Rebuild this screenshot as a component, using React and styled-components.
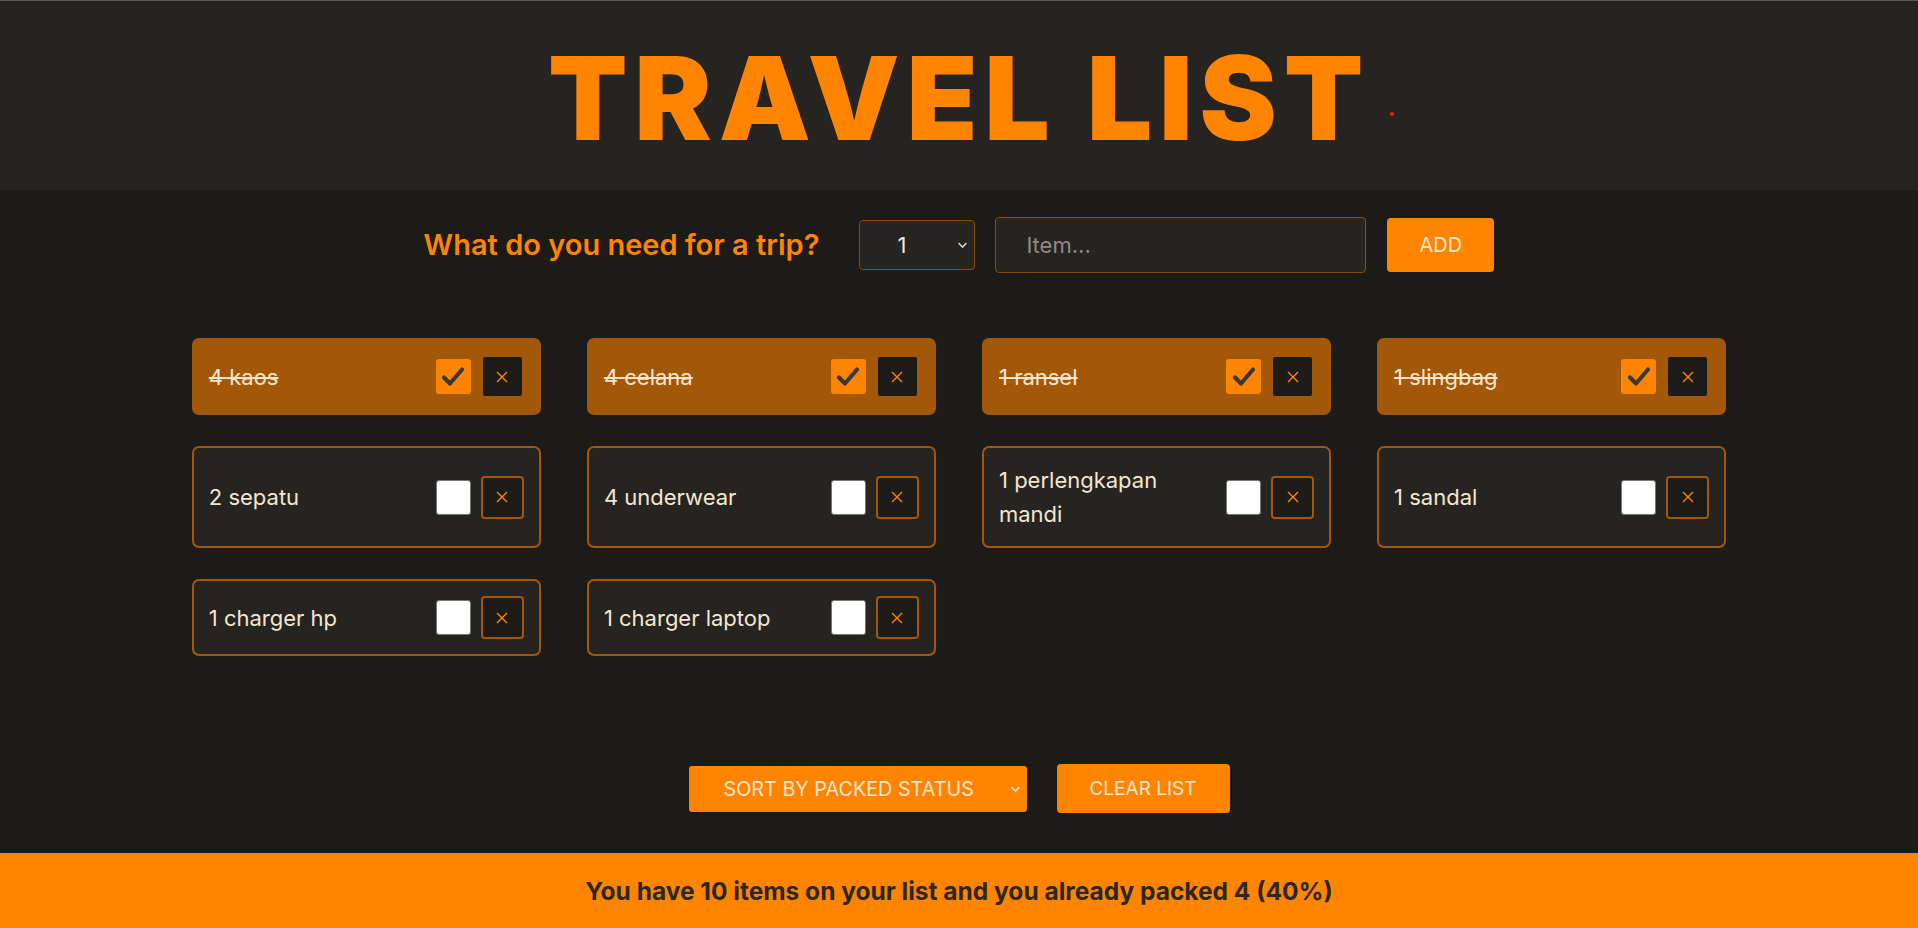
import React, { useState } from "react"
import styled, { createGlobalStyle } from "styled-components"

const GlobalStyle = createGlobalStyle`
    * { box-sizing: border-box; margin: 0; padding: 0; }
    html, body { height: 100%; }
    body {
        background: #1c1b18;
        font-family: Inter, "Noto Sans", "Liberation Sans", sans-serif;
        color: #f3e6d1;
    }
`

const Page = styled.div`
    height: 100vh;
    display: flex;
    flex-direction: column;
    border-top: 1px solid #5a5955;
`

// 헤더
const Header = styled.header`
    height: 189px;
    background: #252420;
    display: flex;
    justify-content: center;
    align-items: center;
    position: relative;
`
const Title = styled.h1`
    font-size: 116px;
    font-weight: 900;
    letter-spacing: 6.8px;
    color: #ff8500;
    line-height: 1;
    padding-top: 4px;
`
const Dot = styled.span`
    position: absolute;
    left: 1390px;
    top: 111px;
    width: 4px;
    height: 4px;
    border-radius: 50%;
    background: #e0201c;
`

// 입력
const Form = styled.form`
    display: flex;
    justify-content: center;
    align-items: center;
    padding: 26px 0 0;
    height: 83px;
`
const Question = styled.h3`
    font-size: 29px;
    font-weight: 600;
    color: #ff8500;
    margin-right: 40px;
`
const SelectBox = styled.div`
    position: relative;
    width: 116px;
    height: 50px;
    border: 1px solid #8a4a08;
    border-radius: 4px;
    background: #252420;
    display: flex;
    align-items: center;
    padding-left: 37px;
    font-size: 22px;
    margin-right: 20px;
`
const Chevron = styled.svg`
    position: absolute;
    right: 6px;
    top: 50%;
    margin-top: -4px;
`
const ItemInput = styled.div`
    width: 371px;
    height: 56px;
    border: 1px solid #8a4a08;
    border-radius: 4px;
    background: #252420;
    display: flex;
    align-items: center;
    padding-left: 30px;
    font-size: 22px;
    color: #8d8a83;
    margin-right: 21px;
`
const OrangeButton = styled.button`
    background: #ff8500;
    color: #f3e6d1;
    border: none;
    border-radius: 4px;
    font-family: inherit;
    font-size: ${(props) => props.fontSize || "20px"};
    text-transform: uppercase;
    width: ${(props) => props.width};
    height: ${(props) => props.height};
    cursor: pointer;
`

// 리스트
const ListArea = styled.div`
    flex: 1;
    display: flex;
    flex-direction: column;
    align-items: center;
    padding-top: 65px;
`
const Grid = styled.ul`
    list-style: none;
    width: 80%;
    display: grid;
    grid-template-columns: repeat(4, 1fr);
    column-gap: 46px;
    row-gap: 31px;
    align-content: start;
`
const Card = styled.li`
    display: flex;
    align-items: center;
    gap: 20px;
    padding: 15px;
    border-radius: 7px;
    border: 2px solid #a35708;
    background: ${(props) => (props.packed ? "#a35708" : "#252420")};
`
const ItemText = styled.span`
    flex: 1;
    font-size: 22px;
    line-height: 34px;
    color: #f3e6d1;
    text-decoration: ${(props) => (props.packed ? "line-through" : "none")};
    text-decoration-thickness: 2px;
`
const Controls = styled.div`
    display: flex;
    align-items: center;
    gap: 10px;
`
const CheckBox = styled.div`
    width: 35px;
    height: 35px;
    border-radius: 3px;
    background: ${(props) => (props.checked ? "#ff8500" : "#fff")};
    border: ${(props) => (props.checked ? "none" : "1px solid #767676")};
    display: flex;
    align-items: center;
    justify-content: center;
    cursor: pointer;
`
const DeleteButton = styled.button`
    width: 43px;
    height: 43px;
    border-radius: 4px;
    background: #1c1b18;
    border: 2px solid #a35708;
    display: flex;
    align-items: center;
    justify-content: center;
    cursor: pointer;
`

const Actions = styled.div`
    display: flex;
    justify-content: center;
    align-items: center;
    gap: 30px;
    padding-bottom: 40px;
`
const SortSelect = styled.div`
    position: relative;
    width: 338px;
    height: 46px;
    background: #ff8500;
    border-radius: 3px;
    display: flex;
    align-items: center;
    padding-left: 35px;
    font-size: 19.8px;
    text-transform: uppercase;
    color: #f3e6d1;
`

const Footer = styled.footer`
    height: 75px;
    background: #ff8500;
    display: flex;
    justify-content: center;
    align-items: center;
    font-size: 24.5px;
    font-weight: 700;
    color: #2a2724;
`

const initialItems = [
    { id: 1, qty: 4, name: "kaos", packed: true },
    { id: 2, qty: 4, name: "celana", packed: true },
    { id: 3, qty: 1, name: "ransel", packed: true },
    { id: 4, qty: 1, name: "slingbag", packed: true },
    { id: 5, qty: 2, name: "sepatu", packed: false },
    { id: 6, qty: 4, name: "underwear", packed: false },
    { id: 7, qty: 1, name: "perlengkapan mandi", packed: false },
    { id: 8, qty: 1, name: "sandal", packed: false },
    { id: 9, qty: 1, name: "charger hp", packed: false },
    { id: 10, qty: 1, name: "charger laptop", packed: false },
]

function CheckIcon() {
    return (
        <svg width="26" height="26" viewBox="0 0 26 26">
            <path d="M4 13.5 L10 19.5 L22 5.5" fill="none" stroke="#3b3936" strokeWidth="4.2" strokeLinecap="round" strokeLinejoin="round" />
        </svg>
    )
}

function CrossIcon() {
    return (
        <svg width="12" height="12" viewBox="0 0 12 12">
            <path d="M1 1 L11 11 M11 1 L1 11" stroke="#ff8500" strokeWidth="1.4" />
        </svg>
    )
}

function ChevronDown({ color }) {
    return (
        <Chevron width="11" height="8" viewBox="0 0 11 8">
            <path d="M1.5 2 L5.5 6 L9.5 2" fill="none" stroke={color} strokeWidth="1.6" />
        </Chevron>
    )
}

function Item({ item, onToggle }) {
    return (
        <Card packed={item.packed}>
            <ItemText packed={item.packed}>{item.qty} {item.name}</ItemText>
            <Controls>
                <CheckBox checked={item.packed} onClick={() => onToggle(item.id)}>
                    {item.packed && <CheckIcon />}
                </CheckBox>
                <DeleteButton><CrossIcon /></DeleteButton>
            </Controls>
        </Card>
    )
}

export default function App() {
    const [items, setItems] = useState(initialItems)
    const packed = items.filter((i) => i.packed).length
    const toggle = (id) => setItems(items.map((i) => (i.id === id ? { ...i, packed: !i.packed } : i)))

    return (
        <>
            <GlobalStyle />
            <Page>
                <Header>
                    <Title>TRAVEL LIST</Title>
                    <Dot />
                </Header>
                <Form onSubmit={(e) => e.preventDefault()}>
                    <Question>What do you need for a trip?</Question>
                    <SelectBox>
                        1
                        <ChevronDown color="#d8d0c2" />
                    </SelectBox>
                    <ItemInput>Item...</ItemInput>
                    <OrangeButton width="107px" height="54px">Add</OrangeButton>
                </Form>
                <ListArea>
                    <Grid>
                        {items.map((item) => (
                            <Item key={item.id} item={item} onToggle={toggle} />
                        ))}
                    </Grid>
                </ListArea>
                <Actions>
                    <SortSelect>
                        Sort by packed status
                        <ChevronDown color="#f3e6d1" />
                    </SortSelect>
                    <OrangeButton width="173px" height="49px" fontSize="19px">Clear list</OrangeButton>
                </Actions>
                <Footer>
                    You have {items.length} items on your list and you already packed {packed} ({Math.round((packed / items.length) * 100)}%)
                </Footer>
            </Page>
        </>
    )
}
